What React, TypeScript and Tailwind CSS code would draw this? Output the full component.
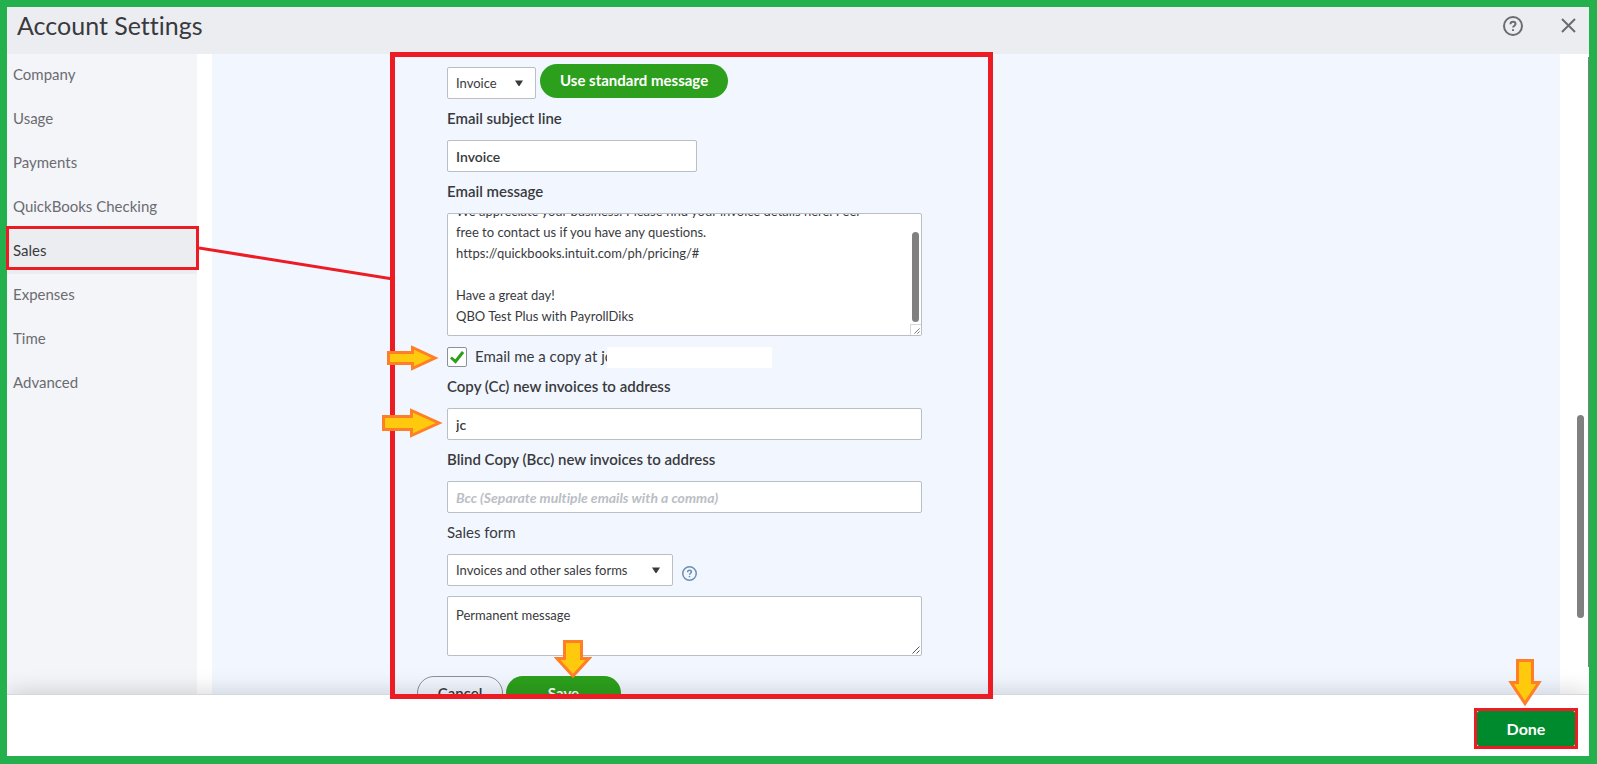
import { useEffect, useRef } from "react";
import type { ReactNode } from "react";

const sections = [
  "Company",
  "Usage",
  "Payments",
  "QuickBooks Checking",
  "Sales",
  "Expenses",
  "Time",
  "Advanced",
];

const emailMessage = `We appreciate your business! Please find your invoice details here. Feel
free to contact us if you have any questions.
https://quickbooks.intuit.com/ph/pricing/#

Have a great day!
QBO Test Plus with PayrollDiks`;

const fieldClass =
  "block h-8 rounded-xs border border-[#babec5] bg-white px-2 text-[#393a3d] outline-none";

function FieldLabel({ htmlFor, light, children }: { htmlFor: string; light?: boolean; children: ReactNode }) {
  return (
    <label
      htmlFor={htmlFor}
      className={
        light
          ? "block pt-[9px] pb-3 text-[15px] leading-5 text-[#393a3d]"
          : "block pt-[9px] pb-3 text-[15px] leading-5 font-semibold text-[#393a3d]"
      }
    >
      {children}
    </label>
  );
}

function DropDown({ id, label, option, className }: { id: string; label: string; option: string; className: string }) {
  return (
    <div className={`relative ${className}`}>
      <select id={id} aria-label={label} className={`${fieldClass} w-full appearance-none pt-px text-[13px]`}>
        <option>{option}</option>
      </select>
      <svg className="pointer-events-none absolute top-[13px] right-[13px] h-[6px] w-[8px]" viewBox="0 0 8 6" aria-hidden="true">
        <path d="M0 0.5h8L4.5 6h-1z" fill="#393a3d" />
      </svg>
    </div>
  );
}

function HelpIcon({ className, strokeWidth }: { className: string; strokeWidth: number }) {
  return (
    <svg className={className} viewBox="0 0 20 20" fill="none" stroke="currentColor" strokeWidth={strokeWidth} aria-hidden="true">
      <circle cx="10" cy="10" r="9" />
      <path d="M7.5 8.2c0-1.5 1.1-2.4 2.5-2.4s2.5.9 2.5 2.2c0 1.7-2.4 1.7-2.4 3.6" />
      <path d="M9 13.200h2v1.800h-2z" fill="currentColor" stroke="none" />
    </svg>
  );
}

function ResizeGrip({ className }: { className: string }) {
  return (
    <svg className={className} viewBox="0 0 8 8" fill="none" stroke="#555" strokeWidth="1" aria-hidden="true">
      <path d="M0.5 7.5l7-7M4.5 7.5l3-3" />
    </svg>
  );
}

function Arrow({ className, viewBox, d }: { className: string; viewBox: string; d: string }) {
  return (
    <svg className={`pointer-events-none absolute ${className}`} viewBox={viewBox} aria-hidden="true">
      <path d={d} fill="#ffc90e" stroke="#ff7f27" strokeWidth="3" />
    </svg>
  );
}

export default function App() {
  const messageRef = useRef<HTMLTextAreaElement>(null);

  useEffect(() => {
    const el = messageRef.current;
    if (el) el.scrollTop = el.scrollHeight;
  }, []);

  return (
    <div className="relative flex h-screen flex-col border-t-[7px] border-r-8 border-b-8 border-l-[7px] border-[#24b14d] bg-white font-['Lato','Liberation_Sans',sans-serif] text-[#393a3d] [font-variant-ligatures:none]">
      <header className="flex h-[47px] shrink-0 items-start justify-between bg-[#ecedf1] pr-[13px] pl-2.5">
        <h1 className="pt-0.5 text-[25px] leading-8">Account Settings</h1>
        <div className="flex items-center gap-[38px] pt-2 text-[#6b6c72]">
          <button type="button" aria-label="Help" className="pt-px">
            <HelpIcon className="size-5" strokeWidth={2} />
          </button>
          <button type="button" aria-label="Close">
            <svg className="size-[15px]" viewBox="0 0 15 15" fill="none" stroke="currentColor" strokeWidth="2" aria-hidden="true">
              <path d="M1 1l13 13M14 1L1 14" />
            </svg>
          </button>
        </div>
      </header>

      <div className="relative flex min-h-0 flex-1 overflow-hidden">
        <nav className="w-[190px] shrink-0 bg-[#f4f5f8]" aria-label="Settings">
          <ul>
            {sections.map((name) => (
              <li key={name}>
                <a
                  href="#"
                  aria-current={name === "Sales" ? "page" : undefined}
                  className={
                    name === "Sales"
                      ? "block h-11 bg-[#ecedf1] px-1.5 text-[15px] leading-10 text-[#393a3d]"
                      : "block h-11 px-1.5 text-[15px] leading-10 text-[#6b6c72]"
                  }
                >
                  {name}
                </a>
              </li>
            ))}
          </ul>
        </nav>

        <main className="mr-[29px] ml-[15px] flex-1 bg-[#f2f7ff] pt-2.5 pl-[205px]">
          <div className="pl-[30px]">
            <div className="flex items-start gap-1">
              <DropDown id="form-type" label="Form type" option="Invoice" className="mt-[3px] w-[89px]" />
              <button type="button" className="h-[34px] rounded-full bg-[#2ca01c] px-5 pb-0.5 text-[15px] font-bold text-white">
                Use standard message
              </button>
            </div>

            <FieldLabel htmlFor="subject">Email subject line</FieldLabel>
            <input id="subject" defaultValue="Invoice" className={`${fieldClass} w-[250px] text-[14px] font-semibold`} />

            <FieldLabel htmlFor="message">Email message</FieldLabel>
            <div className="relative w-[475px]">
              <textarea
                id="message"
                ref={messageRef}
                defaultValue={emailMessage}
                className="block h-[123px] w-full resize-none overflow-hidden rounded-xs border border-[#babec5] bg-white py-2 pr-4 pl-2 text-[13px] leading-[21px] text-[#393a3d]"
              />
              <span className="absolute top-[19px] right-[3px] h-[90px] w-[7px] rounded-full bg-[#808080]" />
              <span className="absolute right-px bottom-px flex size-[11px] items-end justify-end border-t border-l border-[#d4d7dc] bg-white p-px">
                <ResizeGrip className="size-[6px]" />
              </span>
            </div>

            <div className="mt-[11px] flex h-5 items-center">
              <span className="relative block size-5">
                <input
                  id="copy-me"
                  type="checkbox"
                  defaultChecked
                  className="block size-5 appearance-none rounded-xs border border-[#8d9096] bg-white"
                />
                <svg className="pointer-events-none absolute top-[3px] left-[3px] size-[14px]" viewBox="0 0 14 14" fill="none" aria-hidden="true">
                  <path d="M1 7.5l4.5 4L13 2" stroke="#2ca01c" strokeWidth="3" />
                </svg>
              </span>
              <label htmlFor="copy-me" className="w-[140px] pb-0.5 pl-2 text-[15px] leading-5 whitespace-nowrap">
                Email me a copy at jc
              </label>
              <span className="relative h-[21px] w-[165px] bg-white" />
            </div>

            <FieldLabel htmlFor="cc">Copy (Cc) new invoices to address</FieldLabel>
            <input id="cc" defaultValue="jc" className={`${fieldClass} w-[475px] text-[14px] font-semibold`} />

            <FieldLabel htmlFor="bcc">Blind Copy (Bcc) new invoices to address</FieldLabel>
            <input
              id="bcc"
              placeholder="Bcc (Separate multiple emails with a comma)"
              className={`${fieldClass} w-[475px] text-[14px] font-bold placeholder:text-[#babec5] placeholder:italic`}
            />

            <FieldLabel htmlFor="sales-form" light>
              Sales form
            </FieldLabel>
            <div className="flex items-start gap-[9px]">
              <DropDown id="sales-form" label="Sales form" option="Invoices and other sales forms" className="w-[226px]" />
              <button type="button" aria-label="About sales forms" className="mt-3 text-[#6a8fb5]">
                <HelpIcon className="size-[15px]" strokeWidth={2} />
              </button>
            </div>

            <div className="relative mt-2.5 w-[475px]">
              <textarea
                aria-label="Permanent message"
                defaultValue="Permanent message"
                className="block h-[60px] w-full resize-none overflow-hidden rounded-xs border border-[#babec5] bg-white p-2 text-[13px] leading-[21px] text-[#393a3d]"
              />
              <ResizeGrip className="absolute right-[2px] bottom-[2px] size-[8px]" />
            </div>
          </div>

          <div className="mt-5 flex gap-[3px]">
            <button type="button" className="h-[34px] w-[86px] rounded-full border border-[#8d9096] text-[15px] font-semibold">
              Cancel
            </button>
            <button type="button" className="h-[34px] w-[115px] rounded-full bg-[#2ca01c] text-[15px] font-bold text-white">
              Save
            </button>
          </div>
        </main>

        <span className="absolute top-[361px] right-[5px] h-[203px] w-[7px] rounded-full bg-[#808080]" />
        <span className="absolute top-[3px] right-0 h-[610px] w-px bg-[#808080]" />
        <div className="pointer-events-none absolute right-0 -bottom-5 left-0 h-5 shadow-[0_0_24px_rgba(0,0,0,0.2)]" />
      </div>

      <footer className="flex h-[62px] shrink-0 items-start justify-end border-t border-[#d4d7dc] bg-white pt-[13px] pr-[11px]">
        <div className="border-[3px] border-[#ed1c24] bg-white">
          <button type="button" className="block h-[35px] w-[98px] rounded-xs bg-[#008a2e] text-[16px] font-bold text-white">
            Done
          </button>
        </div>
      </footer>

      <div className="pointer-events-none absolute top-[219px] -left-px h-11 w-[193px] border-[3px] border-[#ed1c24]" />
      <svg className="pointer-events-none absolute top-[239px] left-[192px] h-9 w-[194px]" viewBox="0 0 194 36" aria-hidden="true">
        <path d="M0 2L194 33" stroke="#ed1c24" strokeWidth="3" />
      </svg>
      <div className="pointer-events-none absolute top-[45px] left-[383px] h-[647px] w-[603px] border-[5px] border-[#ed1c24]" />
      <Arrow
        className="top-[338px] left-[380px] h-[26px] w-[52px]"
        viewBox="0 0 52 26"
        d="M1.5 7.5h24V2.5L48 13L25.5 23.5V18.5h-24z"
      />
      <Arrow
        className="top-[401px] left-[375px] h-[30px] w-[61px]"
        viewBox="0 0 61 30"
        d="M1.5 8.5h28V2.5L57 15L29.5 27.5V21.5h-28z"
      />
      <Arrow
        className="top-[633px] left-[547px] h-[39px] w-[38px]"
        viewBox="0 0 38 39"
        d="M10.5 1.5h17V18.5H35L19 36L3 18.5h7.500z"
      />
      <Arrow
        className="top-[652px] right-[47px] h-[48px] w-[34px]"
        viewBox="0 0 34 48"
        d="M9.500 1.500h15V23.500H31L17 44.500L3 23.500h6.500z"
      />
    </div>
  );
}
